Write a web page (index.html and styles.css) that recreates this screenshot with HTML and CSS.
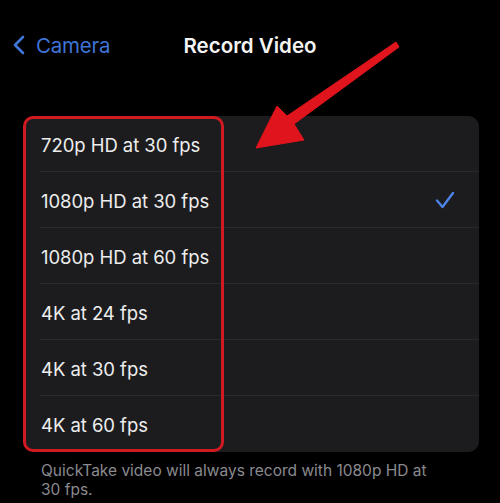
FILE: index.html
```html
<!DOCTYPE html>
<html>
<head>
<meta charset="utf-8">
<link rel="stylesheet" href="styles.css">
</head>
<body>
<div class="screen">
  <header class="nav">
    <div class="back">
      <svg class="chev" width="14" height="20" viewBox="0 0 14 20"><path d="M11 2 L3 10 L11 18" fill="none" stroke="#3f74d8" stroke-width="2.6" stroke-linecap="round" stroke-linejoin="round"/></svg>
      <span>Camera</span>
    </div>
    <div class="title">Record Video</div>
    <div></div>
  </header>
  <div class="card-wrap">
    <ul class="card">
      <li class="row"><span class="label">720p HD at 30 fps</span></li>
      <li class="row"><span class="label">1080p HD at 30 fps</span>
        <svg class="check" width="20" height="18" viewBox="0 0 20 18"><path d="M2 9.5 L7.5 16 L18 2" fill="none" stroke="#4d82e6" stroke-width="2.4" stroke-linecap="round" stroke-linejoin="round"/></svg>
      </li>
      <li class="row"><span class="label">1080p HD at 60 fps</span></li>
      <li class="row"><span class="label">4K at 24 fps</span></li>
      <li class="row"><span class="label">4K at 30 fps</span></li>
      <li class="row"><span class="label">4K at 60 fps</span></li>
    </ul>
    <div class="highlight"></div>
  </div>
  <p class="footer">QuickTake video will always record with 1080p HD at 30 fps.</p>
  <svg class="arrow" width="500" height="503" viewBox="0 0 500 503">
    <path d="M396 42 L399 47 L294 124 L304 140 L256 148 L277 106 L287 116 Z" fill="#e0141c" stroke="#e0141c" stroke-width="1" stroke-linejoin="round"/>
  </svg>
</div>
</body>
</html>
```

FILE: styles.css
```css
html, body {
  margin: 0;
  padding: 0;
  background: #000;
}
.screen {
  position: relative;
  width: 500px;
  height: 503px;
  overflow: hidden;
  font-family: Inter, "Noto Sans", sans-serif;
  color: #f2f2f2;
}
.nav {
  height: 90px;
  display: grid;
  grid-template-columns: 1fr auto 1fr;
  align-items: center;
}
.back {
  display: flex;
  align-items: center;
  gap: 10px;
  padding-left: 12px;
  color: #3f74d8;
  font-size: 20.5px;
  letter-spacing: -0.2px;
}
.chev {
  display: block;
}
.title {
  font-size: 20.5px;
  font-weight: 600;
  letter-spacing: 0px;
  color: #f4f4f4;
}
.card-wrap {
  position: relative;
  margin: 26px 21px 0 25px;
}
.card {
  list-style: none;
  margin: 0;
  padding: 0 0 0 15px;
  background: #1c1c1e;
  border-radius: 11px;
}
.row {
  height: 56px;
  display: flex;
  align-items: center;
  justify-content: space-between;
  padding-right: 24px;
  border-bottom: 1px solid #2a2a2d;
  box-sizing: border-box;
}
.row:last-child {
  border-bottom: none;
}
.label {
  padding-left: 1px;
  padding-top: 2px;
  font-size: 18.5px;
  letter-spacing: -0.05px;
  color: #ededed;
}
.check {
  display: block;
}
.highlight {
  position: absolute;
  left: -2px;
  top: 0;
  width: 195px;
  height: 330px;
  border: 3px solid #d01a22;
  border-radius: 10px;
}
.footer {
  width: 390px;
  margin: 9px 0 0 41px;
  font-size: 15.5px;
  line-height: 19px;
  color: #8a8a8f;
}
.arrow {
  position: absolute;
  left: 0;
  top: 0;
  pointer-events: none;
}
```
